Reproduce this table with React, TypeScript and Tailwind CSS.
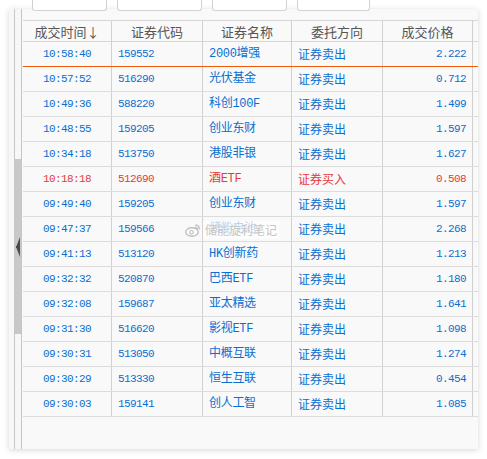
const rows = [
  { t: "10:58:40", code: "159552", name: "2000增强", dir: "证券卖出", price: "2.222" },
  { t: "10:57:52", code: "516290", name: "光伏基金", dir: "证券卖出", price: "0.712" },
  { t: "10:49:36", code: "588220", name: "科创100F", dir: "证券卖出", price: "1.499" },
  { t: "10:48:55", code: "159205", name: "创业东财", dir: "证券卖出", price: "1.597" },
  { t: "10:34:18", code: "513750", name: "港股非银", dir: "证券卖出", price: "1.627" },
  { t: "10:18:18", code: "512690", name: "酒ETF", dir: "证券买入", price: "0.508", buy: true },
  { t: "09:49:40", code: "159205", name: "创业东财", dir: "证券卖出", price: "1.597" },
  { t: "09:47:37", code: "159566", name: "储能电池", dir: "证券卖出", price: "2.268" },
  { t: "09:41:13", code: "513120", name: "HK创新药", dir: "证券卖出", price: "1.213" },
  { t: "09:32:32", code: "520870", name: "巴西ETF", dir: "证券卖出", price: "1.180" },
  { t: "09:32:08", code: "159687", name: "亚太精选", dir: "证券卖出", price: "1.641" },
  { t: "09:31:30", code: "516620", name: "影视ETF", dir: "证券卖出", price: "1.098" },
  { t: "09:30:31", code: "513050", name: "中概互联", dir: "证券卖出", price: "1.274" },
  { t: "09:30:29", code: "513330", name: "恒生互联", dir: "证券卖出", price: "0.454" },
  { t: "09:30:03", code: "159141", name: "创人工智", dir: "证券卖出", price: "1.085" },
];

const cols = "grid grid-cols-[89px_91px_89px_91px_90px_4px]";
const mono = "font-['Liberation_Mono','Noto_Sans_CJK_SC',monospace] text-[11px] tracking-[-0.6px]";
const cjk = "font-['Noto_Sans_CJK_SC','Liberation_Sans',sans-serif] text-[12px]";

function WeiboIcon() {
  return (
    <svg width="16" height="14" viewBox="0 0 16 14" fill="none">
      <ellipse cx="7" cy="9" rx="6.2" ry="4.3" stroke="#bdbdbd" strokeWidth="1.4" fill="#ffffff" />
      <circle cx="6.5" cy="9.3" r="1.8" stroke="#bdbdbd" strokeWidth="1.2" />
      <path d="M10.5 2.2c2.2 0 3.8 1.6 3.8 3.8" stroke="#bdbdbd" strokeWidth="1.3" strokeLinecap="round" />
      <path d="M10.6 4.3c1 0 1.7 0.7 1.7 1.7" stroke="#bdbdbd" strokeWidth="1.2" strokeLinecap="round" />
    </svg>
  );
}

export default function App() {
  return (
    <div className="w-[487px] h-[459px] bg-white overflow-hidden">
      {/* 顶部输入框的下沿 */}
      <div className="relative z-10 flex h-[9px] pl-[32px] gap-[10px]">
        <div className="w-[75px] h-[11px] bg-white border border-t-0 border-[#d2d2d2] rounded-b-[3px]" />
        <div className="w-[85px] h-[11px] bg-white border border-t-0 border-[#d2d2d2] rounded-b-[3px]" />
        <div className="w-[75px] h-[11px] bg-white border border-t-0 border-[#d2d2d2] rounded-b-[3px]" />
        <div className="w-[73px] h-[11px] bg-white border border-t-0 border-[#d2d2d2] rounded-b-[3px]" />
      </div>

      <div className="ml-[9px] w-[469px] h-[440px] bg-[#f9f9f9] shadow-[0_1px_6px_rgba(0,0,0,0.16)] flex">
        {/* 左侧分隔条 */}
        <div className="w-[5px] bg-[#f7f7f7]" />
        <div className="w-[8px] border-x border-[#c6c6c6] bg-[#f7f7f7] flex flex-col">
          <div className="h-[150px]" />
          <div className="h-[175px] bg-[#c8c8c8] flex items-center justify-center">
            <svg width="5" height="20" viewBox="0 0 5 20">
              <polygon points="4,0 4,20 0.5,11 0.5,9" fill="#4a4a4a" />
              <rect x="0" y="9" width="1" height="2" fill="#4a4a4a" />
            </svg>
          </div>
        </div>

        <div className="flex-1 pt-[11px] pl-px">
          <div className="relative border-t border-[#d6d6d6]">
            <div className={`${cols} h-[21px] border-b border-[#d6d6d6] text-[#555] ${cjk} text-[13px]`}>
              {["成交时间↓", "证券代码", "证券名称", "委托方向", "成交价格"].map((h) => (
                <div key={h} className="flex items-center justify-center border-r border-[#d0d0d0] pt-px">
                  {h}
                </div>
              ))}
              <div />
            </div>

            {rows.map((r, i) => (
              <div
                key={i}
                className={`${cols} h-[25px] border-b ${i === 0 ? "border-[#f05a0a]" : "border-[#dcdcdc]"} ${
                  r.buy ? "text-[#e8383d]" : "text-[#0a6fd1]"
                }`}
              >
                <div className={`flex items-center justify-center border-r border-[#d0d0d0] ${mono}`}>{r.t}</div>
                <div className={`flex items-center pl-[6px] border-r border-[#d0d0d0] ${mono}`}>{r.code}</div>
                <div className={`flex items-center pl-[6px] border-r border-[#d0d0d0] font-['Liberation_Mono','Noto_Sans_CJK_SC',monospace] text-[12px] tracking-[-0.3px]`}>
                  {r.name}
                </div>
                <div className={`flex items-center pl-[6px] border-r border-[#d0d0d0] ${cjk}`}>{r.dir}</div>
                <div className={`flex items-center justify-end pr-[6px] border-r border-[#d0d0d0] ${mono}`}>{r.price}</div>
                <div />
              </div>
            ))}

            {/* 水印 */}
            <div className="absolute left-[162px] top-[200px] flex items-center">
              <WeiboIcon />
              <span className="ml-[2px] px-[2px] bg-white/70 text-[#c4c4c4] font-['Noto_Sans_CJK_SC',sans-serif] text-[12px] [text-shadow:0_0_2px_#fff]">
                储能旋利笔记
              </span>
            </div>
          </div>
        </div>
      </div>
    </div>
  );
}
